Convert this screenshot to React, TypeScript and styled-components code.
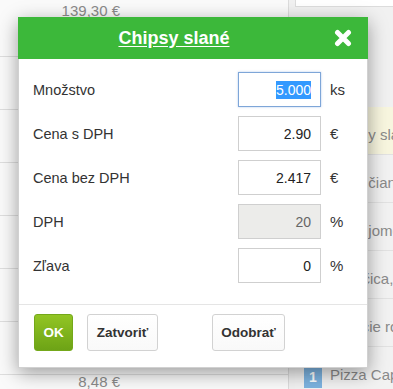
import styled, { createGlobalStyle } from "styled-components";

const Global = createGlobalStyle`
    html, body { margin: 0; padding: 0; }
    body {
        font-family: "Liberation Sans", Arial, sans-serif;
        width: 393px; height: 389px; overflow: hidden;
        background: #f3f3f3;
    }
`

const Page = styled.div`
    position: relative;
    width: 393px; height: 389px;
    display: flex;
    overflow: hidden;
`

const LeftPanel = styled.div`
    width: 288px;
    flex-shrink: 0;
    background: #fafafa;
    display: flex;
    flex-direction: column;
`

const BillRow = styled.div<{ offset: number }>`
    height: 52px;
    flex-shrink: 0;
    border-bottom: 1px solid #dedede;
    display: grid;
    grid-template-columns: 120px 1fr;
    column-gap: 28px;
    align-content: start;
    padding-top: ${p => p.offset}px;
    box-sizing: content-box;
`

const Price = styled.span`
    text-align: right;
    font-size: 15px;
    color: #8a8a8a;
    line-height: 14px;
`

const Qty = styled.span`
    font-size: 13px;
    color: #8a8a8a;
    padding-top: 12px;
`

const RightPanel = styled.div`
    flex: 1;
    border-left: 1px solid #dcdcdc;
    padding-left: 6px;
    display: flex;
    flex-direction: column;
    background: #f1f1f1;
    min-width: 0;
`

const TopBox = styled.div`
    height: 6px;
    flex-shrink: 0;
    background: #fff;
    border: 1px solid #dcdcdc;
    border-top: none;
    border-right: none;
    margin-bottom: 100px;
`

const ItemRow = styled.div<{ active?: boolean }>`
    height: 48px;
    box-sizing: border-box;
    flex-shrink: 0;
    border-bottom: 1px solid #e2e2e2;
    background: ${p => (p.active ? "#f8f6df" : "#f2f2f2")};
    display: flex;
    align-items: flex-start;
    gap: 8px;
    padding: 19px 0 0 9px;
    white-space: nowrap;
`

const Badge = styled.span`
    width: 18px; height: 22px;
    background: #7db3e0;
    color: #fff;
    font-weight: bold;
    font-size: 14px;
    display: flex;
    align-items: center;
    justify-content: center;
    flex-shrink: 0;
`

const ItemName = styled.span`
    font-size: 15px;
    color: #8a8a8a;
    line-height: 14px;
    padding-top: 2px;
`

const Modal = styled.div`
    position: absolute;
    left: 18px; top: 17px;
    width: 350px;
    box-sizing: border-box;
    background: #fff;
    border: 1px solid rgba(0, 0, 0, 0.18);
    border-top: none;
    box-shadow: 0 5px 18px rgba(0, 0, 0, 0.38);
`

const Header = styled.div`
    height: 42px;
    background: #3cb83a;
    display: flex;
    align-items: center;
    gap: 4px;
    padding-right: 16px;
    margin: 0 -1px;
`

const Title = styled.h1`
    flex: 1;
    margin: 0;
    text-align: center;
    color: #fff;
    font-size: 18px;
    font-weight: bold;
    text-decoration: underline;
    text-underline-offset: 2px;
`

const Close = styled.span`
    width: 18px; height: 18px;
    display: flex;
`

const Body = styled.div`
    padding: 13px 15px 21px 14px;
    display: flex;
    flex-direction: column;
    gap: 9px;
`

const Row = styled.div`
    display: grid;
    grid-template-columns: 1fr 83px 22px;
    column-gap: 9px;
    align-items: center;
`

const Label = styled.span`
    font-size: 14.5px;
    color: #333;
`

const Field = styled.div<{ focused?: boolean; disabled?: boolean }>`
    height: 35px;
    box-sizing: border-box;
    border: 1px solid ${p => (p.focused ? "#7ea6d8" : "#cfcfcf")};
    box-shadow: ${p => (p.focused ? "0 0 2px rgba(102,150,220,0.5)" : "none")};
    background: ${p => (p.disabled ? "#ececea" : "#fff")};
    color: ${p => (p.disabled ? "#666" : "#222")};
    font-size: 14px;
    display: flex;
    align-items: center;
    justify-content: flex-end;
    padding-right: 9px;
`

const Selected = styled.span`
    background: #3399ff;
    color: #fff;
    line-height: 18px;
`

const Unit = styled.span`
    font-size: 15px;
    color: #333;
`

const Footer = styled.div`
    border-top: 1px solid #e5e5e5;
    padding: 9px 15px 16px;
    display: flex;
    align-items: center;
    gap: 14px;
`

const Button = styled.button<{ primary?: boolean; push?: boolean }>`
    height: 37px;
    padding: 0 8.5px;
    border-radius: 3px;
    font-family: "Liberation Sans", Arial, sans-serif;
    font-weight: bold;
    font-size: 13.5px;
    margin-left: ${p => (p.push ? "40px" : "0")};
    border: 1px solid ${p => (p.primary ? "#74a81a" : "#d2d2d2")};
    color: ${p => (p.primary ? "#fff" : "#333")};
    background: ${p => (p.primary ? "linear-gradient(#92c524, #6da316)" : "linear-gradient(#fff, #f9f9f9)")};
`

const rows = [
    { label: "Množstvo", value: "5.000", unit: "ks", focused: true },
    { label: "Cena s DPH", value: "2.90", unit: "€" },
    { label: "Cena bez DPH", value: "2.417", unit: "€" },
    { label: "DPH", value: "20", unit: "%", disabled: true },
    { label: "Zľava", value: "0", unit: "%" },
];

const bill = [
    { price: "139,30 €", offset: 4 }, { price: "", offset: 0 }, { price: "", offset: 0 },
    { price: "", offset: 0 }, { price: "", offset: 0 }, { price: "", offset: 0 },
    { price: "", offset: 0 }, { price: "8,48 €", qty: "60", offset: 0 },
];

const items = ["Chipsy slané", "Syr s čianom", "Ryby jomo", "Omáčica, soľ", "Kuracie rolky", "Pizza Caprese"];

const App = () => {
    return (
        <Page>
            <Global />
            <LeftPanel>
                {bill.map((b, i) => (
                    <BillRow key={i} offset={b.offset}>
                        <Price>{b.price}</Price>
                        <Qty>{b.qty}</Qty>
                    </BillRow>
                ))}
            </LeftPanel>
            <RightPanel>
                <TopBox />
                {items.map((name, i) => (
                    <ItemRow key={i} active={i === 0}>
                        <Badge>1</Badge>
                        <ItemName>{name}</ItemName>
                    </ItemRow>
                ))}
            </RightPanel>
            <Modal>
                <Header>
                    <Title>Chipsy slané</Title>
                    <Close>
                        <svg width="18" height="18" viewBox="0 0 18 18">
                            <path d="M3.5 3.5 L14.5 14.5 M14.5 3.5 L3.5 14.5" stroke="#fff" strokeWidth="5" strokeLinecap="round" />
                        </svg>
                    </Close>
                </Header>
                <Body>
                    {rows.map(r => (
                        <Row key={r.label}>
                            <Label>{r.label}</Label>
                            <Field focused={r.focused} disabled={r.disabled}>
                                {r.focused ? <Selected>{r.value}</Selected> : r.value}
                            </Field>
                            <Unit>{r.unit}</Unit>
                        </Row>
                    ))}
                </Body>
                <Footer>
                    <Button primary>OK</Button>
                    <Button>Zatvoriť</Button>
                    <Button push>Odobrať</Button>
                </Footer>
            </Modal>
        </Page>
    );
}

export default App;
